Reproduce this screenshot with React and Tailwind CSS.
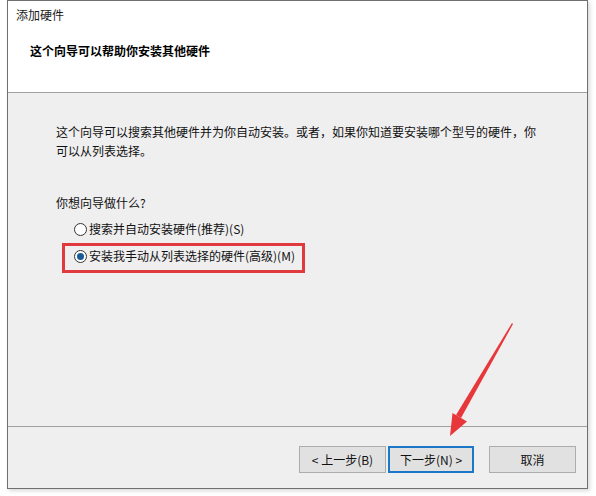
import React from "react";

const font = { fontFamily: '"Noto Sans CJK SC", "Microsoft YaHei", sans-serif' };

function Radio({ checked }) {
  return (
    <span className="flex h-[13px] w-[13px] shrink-0 items-center justify-center rounded-full border border-[#333333] bg-white">
      {checked && <span className="h-[7px] w-[7px] rounded-full bg-[#1a5a96]" />}
    </span>
  );
}

function Button({ children, primary }) {
  return (
    <button
      className={
        "flex h-[27px] items-center justify-center bg-[#e1e1e1] text-[12px] text-[#111] " +
        (primary ? "w-[86px] border-2 border-[#1c78c6]" : "w-[87px] border border-[#adadad]")
      }
    >
      {children}
    </button>
  );
}

export default function App() {
  return (
    <div className="relative h-[496px] w-[596px] overflow-hidden bg-white pl-[7px]" style={font}>
      <div className="flex h-[489px] w-[581px] flex-col border border-[#707070] bg-[#f0eff0] shadow-[2px_2px_4px_rgba(0,0,0,0.15)]">
        {/* header */}
        <div className="h-[91px] bg-white pl-[8px] pt-[6px]">
          <div className="text-[12px] leading-[16px] text-[#1a1a1a]">添加硬件</div>
          <div className="mt-[20px] pl-[14px] text-[12px] font-bold leading-[16px] text-black">
            这个向导可以帮助你安装其他硬件
          </div>
        </div>
        <div className="h-px bg-[#a0a0a0]" />

        {/* body */}
        <div className="flex-1 pl-[48px] pt-[29px] text-[12px] text-[#111]">
          <p className="w-[490px] leading-[19px]">
            这个向导可以搜索其他硬件并为你自动安装。或者，如果你知道要安装哪个型号的硬件，你可以从列表选择。
          </p>
          <p className="mt-[33px] leading-[19px]">你想向导做什么?</p>
          <div className="mt-[7px] flex h-[20px] items-center gap-[2px] pl-[18px]">
            <Radio />
            <span>搜索并自动安装硬件(推荐)(S)</span>
          </div>
          <div className="relative mt-[7px] flex h-[20px] items-center gap-[2px] pl-[18px]">
            <Radio checked />
            <span>安装我手动从列表选择的硬件(高级)(M)</span>
            <span className="absolute left-[6px] top-[-3px] h-[30px] w-[243px] border-[3px] border-[#e0393e]" />
          </div>
        </div>

        <div className="h-px bg-[#a0a0a0]" />
        {/* footer */}
        <div className="flex h-[61px] items-start justify-end pr-[11px] pt-[19px]">
          <div className="flex gap-[2px]">
            <Button>&lt; 上一步(B)</Button>
            <Button primary>下一步(N) &gt;</Button>
          </div>
          <div className="ml-[15px]">
            <Button>取消</Button>
          </div>
        </div>
      </div>

      {/* red pointer arrow */}
      <svg className="pointer-events-none absolute left-0 top-0" width="596" height="496">
        <polygon points="512,323 513,324 461,418 456,415" fill="#e8373a" />
        <polygon points="450,436 452.5,413 467,421.5" fill="#e8373a" />
      </svg>
    </div>
  );
}
